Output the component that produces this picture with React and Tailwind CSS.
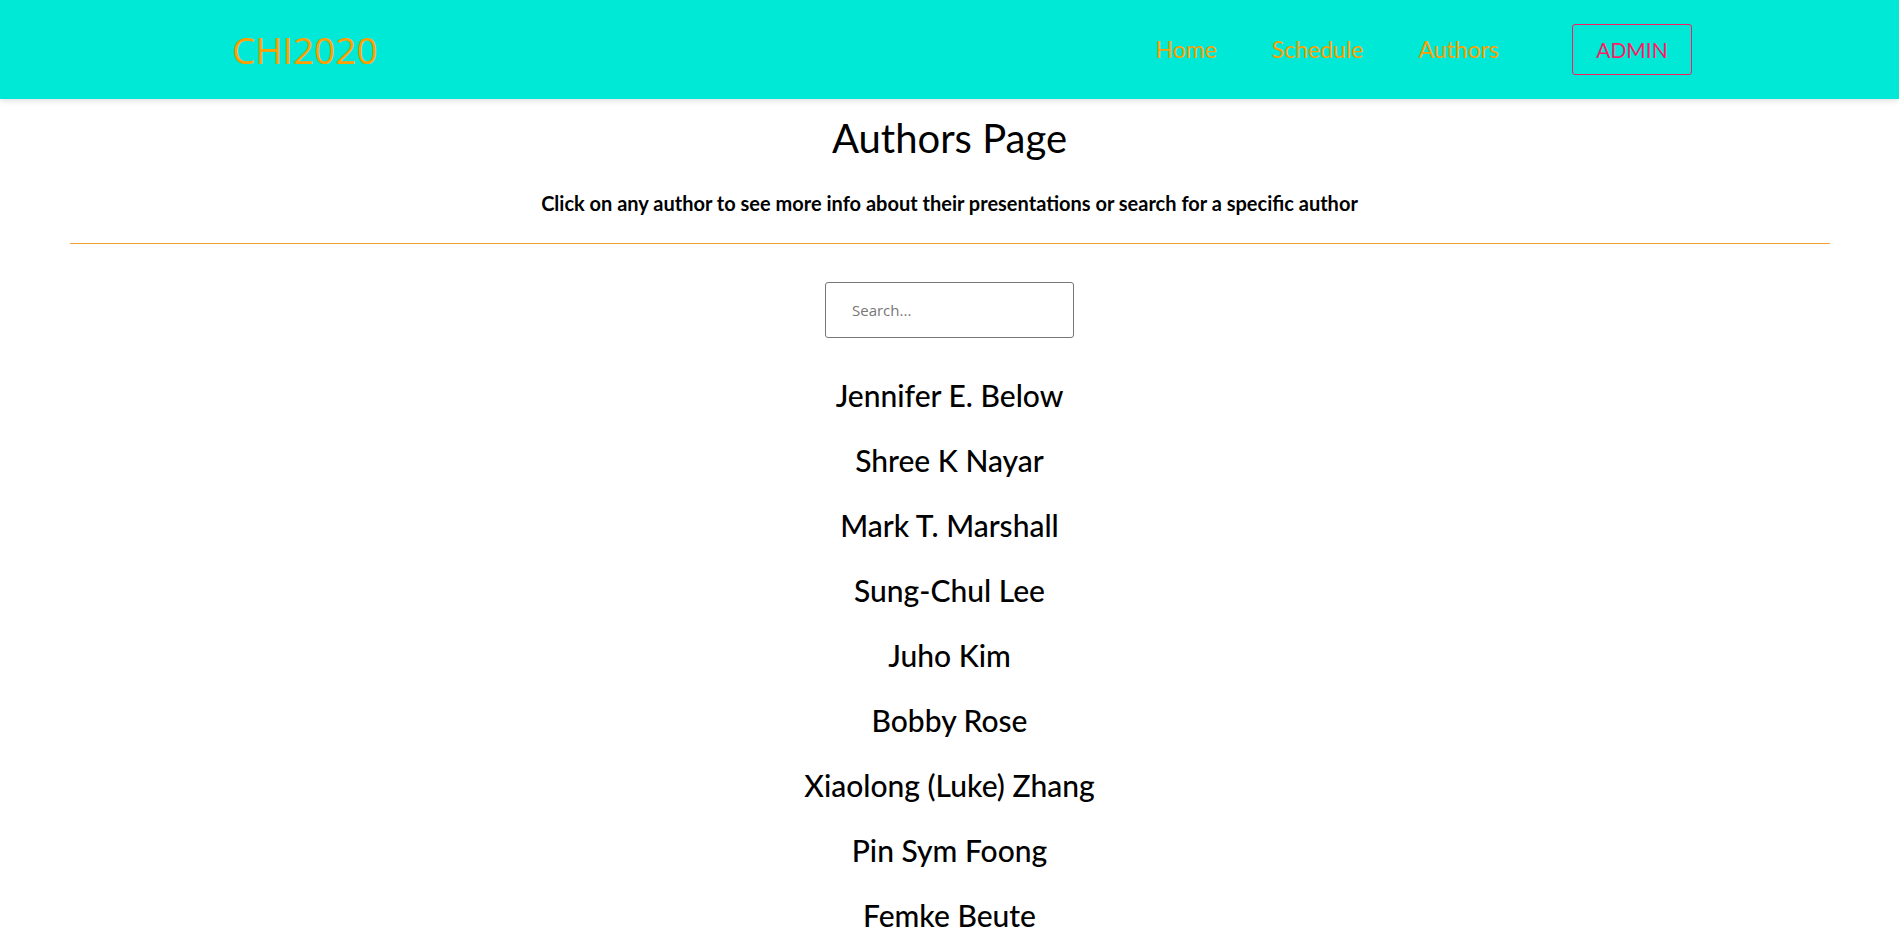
import { useState } from "react";

const authors = [
  "Jennifer E. Below",
  "Shree K Nayar",
  "Mark T. Marshall",
  "Sung-Chul Lee",
  "Juho Kim",
  "Bobby Rose",
  "Xiaolong (Luke) Zhang",
  "Pin Sym Foong",
  "Femke Beute",
];

function NavBar() {
  const links = ["Home", "Schedule", "Authors"];

  return (
    <header className="flex h-[99px] items-center justify-between bg-[#00e9d6] pl-[232px] pr-[207px] shadow-[0_2px_6px_rgba(0,0,0,0.12)]">
      <a
        className="font-['Open_Sans',sans-serif] text-[37px] leading-none text-[#ff9f00]"
        href="#"
      >
        CHI2020
      </a>
      <nav className="flex items-center font-['Lato',sans-serif] text-[23px] text-[#ff9f00]">
        <div className="flex items-center gap-[55px]">
          {links.map((link) => (
            <a key={link} href="#">
              {link}
            </a>
          ))}
        </div>
        <a
          className="ml-[73px] flex h-[51px] w-[120px] items-center justify-center rounded-[3px] border border-[#ff1a66] text-[21px] text-[#ff1a66]"
          href="#"
        >
          ADMIN
        </a>
      </nav>
    </header>
  );
}

export default function App() {
  const [query, setQuery] = useState("");

  const visible = authors.filter((name) =>
    name.toLowerCase().includes(query.toLowerCase())
  );

  return (
    <div className="min-h-screen bg-white font-['Lato',sans-serif] text-black">
      <NavBar />

      <main className="flex flex-col items-center">
        <h1 className="mt-[15px] text-[40px] leading-[48px]">Authors Page</h1>
        <p className="mt-[29px] text-[20px] font-bold leading-[24px]">
          Click on any author to see more info about their presentations or
          search for a specific author
        </p>

        <hr className="mt-[28px] w-[1760px] border-t border-[#f0a030]" />

        <input
          className="mt-[38px] h-[56px] w-[249px] rounded-[3px] border border-[#777777] pl-[26px] font-['Open_Sans',sans-serif] text-[15px] text-[#333] outline-none placeholder:text-[#777777]"
          onChange={(event) => setQuery(event.target.value)}
          placeholder="Search..."
          type="text"
          value={query}
        />

        <ul className="mt-[25px] flex flex-col items-center">
          {visible.map((name) => (
            <li key={name} className="text-[30px] font-medium leading-[65px]">
              <a href="#">{name}</a>
            </li>
          ))}
        </ul>
      </main>
    </div>
  );
}
